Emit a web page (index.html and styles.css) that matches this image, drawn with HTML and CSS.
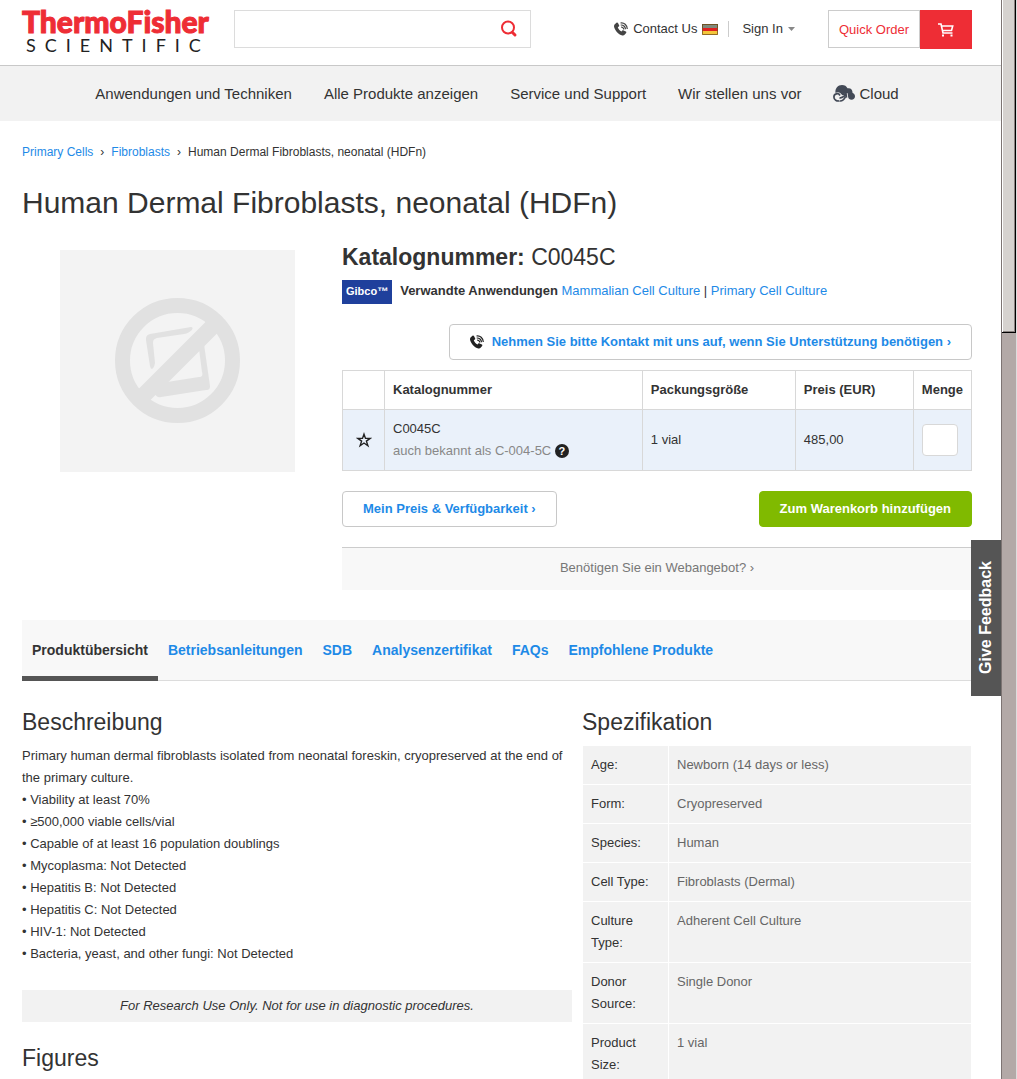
FILE: index.html
```html
<!DOCTYPE html>
<html lang="de">
<head>
  <meta charset="utf-8">
  <meta name="viewport" content="width=device-width,initial-scale=1.0">
  <title>Human Dermal Fibroblasts, neonatal (HDFn)</title>
  <link rel="stylesheet" href="styles.css">
</head>
<body>
  <svg class="sprite" aria-hidden="true">
    <symbol id="phone" viewBox="0 0 14 14">
      <path fill="currentColor" d="M.8 2.200 2.500.8c.6-.4 1.200-.2 1.600.4l1 2c.3.5.1 1-.3 1.300l-1 .7c.5 1.700 2 3.300 3.700 4.200l.8-.9c.4-.4.9-.4 1.300-.1l2.300 1.200c.5.3.6.9.2 1.300l-1.300 1.700c-.7.9-2 1.100-3.200.6C4 12 1 8.400.1 5-.1 3.900.1 2.800.8 2.200z"/>
      <path fill="none" stroke="currentColor" stroke-width="1.200" d="M6.500 1C10 .3 13.200 3 13.300 7M6.700 3c2.600-.2 4.600 1.500 4.800 4.200M7 5c1.600 0 2.600 1 2.800 2.500"/>
    </symbol>
  </svg>

  <div class="page">
    <header class="header">
      <a class="logo" href="#">
        <span class="logo-top">ThermoFisher</span>
        <span class="logo-bottom">SCIENTIFIC</span>
      </a>
      <form class="search" action="">
        <input type="text" aria-label="Search">
        <button type="submit" aria-label="Search">
          <svg width="18" height="18" viewBox="0 0 18 18"><circle cx="8" cy="7.500" r="6" fill="none" stroke="#ee2d35" stroke-width="2"/><path d="M12.500 12.500l2.500 2.500" stroke="#ee2d35" stroke-width="3" stroke-linecap="round"/></svg>
        </button>
      </form>
      <div class="account">
        <a class="contact" href="#">
          <svg class="icon-phone" width="14" height="14"><use href="#phone"/></svg>
          Contact Us
          <svg width="16" height="11" viewBox="0 0 16 11"><path fill="#3d4a35" d="M0 0h16v4H0z"/><path fill="#e01f1f" d="M0 4h16v3H0z"/><path fill="#f4c63a" d="M0 7h16v4H0z"/><path fill="#fff" opacity=".35" d="M1 1h14v3H1z"/><path fill="none" stroke="#7c5420" stroke-opacity=".8" d="M.5.5h15v10H.5z"/></svg>
        </a>
        <a class="signin" href="#">Sign In <svg width="7" height="4" viewBox="0 0 7 4"><path fill="#888" d="M0 0h7L3.500 4z"/></svg></a>
      </div>
      <div class="order">
        <a class="quick" href="#">Quick Order</a>
        <a class="cart" href="#" aria-label="Cart">
          <svg width="16" height="14" viewBox="0 0 16 14" fill="none" stroke="#fff"><path stroke-width="1.600" d="M0 1h3l2 9h9.500M3.500 3h11.200l-1.200 4.500H4.700"/><path fill="#fff" stroke="none" d="M4 11.500h2v2H4zm8.500 0h2v2h-2z"/></svg>
        </a>
      </div>
    </header>

    <nav class="nav">
      <a href="#">Anwendungen und Techniken</a>
      <a href="#">Alle Produkte anzeigen</a>
      <a href="#">Service und Support</a>
      <a href="#">Wir stellen uns vor</a>
      <a href="#" class="cloud">
        <svg width="22" height="17" viewBox="0 0 22 17">
          <path fill="#434a57" d="M2.500 8C1.800 3.500 5 0 9 0c2.600 0 4.600 1.200 5.500 3.300 3.200-.6 5.200 1.400 5 4.500C21.200 8.500 22 9.800 22 11.300c0 2-1.500 3.500-3.500 3.500-1.800 0-3-1-3.300-2.500L14.500 8 8.500 9.500C7 7 4.500 6.500 2.500 8z"/>
          <path fill="none" stroke="#434a57" stroke-width="1.700" d="M7 10.500C5.500 7.500.9 8.500.9 12c0 3 3 4.300 5.200 3.900M6.500 12.800c2.500.8 4-.8 6-3M6.500 16c3.500.3 5-2 6-4.500M9 9.500l4-.8.500 4"/>
        </svg>
        Cloud
      </a>
    </nav>

    <main class="content">
      <div class="breadcrumb">
        <a href="#">Primary Cells</a><span>›</span><a href="#">Fibroblasts</a><span>›</span>Human Dermal Fibroblasts, neonatal (HDFn)
      </div>
      <h1>Human Dermal Fibroblasts, neonatal (HDFn)</h1>

      <div class="product">
        <div class="product-image">
          <svg width="235" height="222" viewBox="0 0 235 222">
            <path fill="#f3f3f3" d="M0 0h235v222H0z"/>
            <g fill="#e1e1e1">
              <path d="M90 84l41-7c4 0 0 6-7 7l-27 4c-3 1-4 2-4 5l2 20c-1 6-4 8-5 3l-4-26c0-4 1-5 4-6z"/>
              <path d="M144 94l6 42c0 3-1 4-4 4l-45 7c-3 1-5-1-6-3l12-12 32-5c3 0 4-2 3-5l-3-23z"/>
            </g>
            <path stroke="#e1e1e1" stroke-width="16" d="M77 152l80-80"/>
            <circle cx="117.500" cy="110.500" r="55" fill="none" stroke="#e1e1e1" stroke-width="15"/>
          </svg>
        </div>

        <div class="product-info">
          <h2 class="catalog"><b>Katalognummer:</b> C0045C</h2>
          <div class="related">
            <span class="brand">Gibco™</span>
            <p><b>Verwandte Anwendungen</b> <a href="#">Mammalian Cell Culture</a> | <a href="#">Primary Cell Culture</a></p>
          </div>
          <a class="btn btn-contact" href="#"><svg width="14" height="14"><use href="#phone"/></svg>Nehmen Sie bitte Kontakt mit uns auf, wenn Sie Unterstützung benötigen ›</a>

          <table class="order-table">
            <thead>
              <tr>
                <th class="col-star"></th>
                <th>Katalognummer</th>
                <th class="col-size">Packungsgröße</th>
                <th class="col-price">Preis (EUR)</th>
                <th class="col-qty">Menge</th>
              </tr>
            </thead>
            <tbody>
              <tr>
                <td class="col-star"><button class="star" type="button" aria-label="Favorit"><svg width="16" height="16" viewBox="0 0 16 16"><path fill="none" stroke="#222" stroke-width="1.400" d="M8 2.200l1.500 4.200h4.600l-3.700 2.700 1.500 4.700L8 11l-3.900 2.800 1.500-4.700-3.700-2.700h4.600z"/></svg></button></td>
                <td>C0045C<div class="alias">auch bekannt als C-004-5C <span class="help">?</span></div></td>
                <td>1 vial</td>
                <td>485,00</td>
                <td><input class="qty" type="text" aria-label="Menge"></td>
              </tr>
            </tbody>
          </table>

          <div class="actions">
            <a class="btn" href="#">Mein Preis &amp; Verfügbarkeit ›</a>
            <button class="btn btn-cart" type="button">Zum Warenkorb hinzufügen</button>
          </div>
          <a class="quote" href="#">Benötigen Sie ein Webangebot? ›</a>
        </div>
      </div>

      <div class="tabs">
        <a class="active" href="#">Produktübersicht</a>
        <a href="#">Betriebsanleitungen</a>
        <a href="#">SDB</a>
        <a href="#">Analysenzertifikat</a>
        <a href="#">FAQs</a>
        <a href="#">Empfohlene Produkte</a>
      </div>

      <div class="details">
        <section>
          <h2>Beschreibung</h2>
          <p>Primary human dermal fibroblasts isolated from neonatal foreskin, cryopreserved at the end of the primary culture.</p>
          <ul>
            <li>Viability at least 70%</li>
            <li>≥500,000 viable cells/vial</li>
            <li>Capable of at least 16 population doublings</li>
            <li>Mycoplasma: Not Detected</li>
            <li>Hepatitis B: Not Detected</li>
            <li>Hepatitis C: Not Detected</li>
            <li>HIV-1: Not Detected</li>
            <li>Bacteria, yeast, and other fungi: Not Detected</li>
          </ul>
          <p class="note">For Research Use Only. Not for use in diagnostic procedures.</p>
          <h2>Figures</h2>
        </section>
        <section>
          <h2>Spezifikation</h2>
          <table class="specs">
            <tr><th>Age:</th><td>Newborn (14 days or less)</td></tr>
            <tr><th>Form:</th><td>Cryopreserved</td></tr>
            <tr><th>Species:</th><td>Human</td></tr>
            <tr><th>Cell Type:</th><td>Fibroblasts (Dermal)</td></tr>
            <tr><th>Culture Type:</th><td>Adherent Cell Culture</td></tr>
            <tr><th>Donor Source:</th><td>Single Donor</td></tr>
            <tr><th>Product Size:</th><td>1 vial</td></tr>
          </table>
        </section>
      </div>
    </main>
    <button class="feedback" type="button">Give Feedback</button>
  </div>
  <div class="scrollbar"><div class="thumb"></div></div>
</body>
</html>
```

FILE: styles.css
```css
* { box-sizing: border-box; }
body {
  margin: 0;
  height: 100vh;
  overflow: hidden;
  display: grid;
  grid-template-columns: 1fr 16px;
  font: 13px/22px "Liberation Sans", Helvetica, Arial, sans-serif;
  color: #333;
  background: #fff;
}
a { color: #1e8ae7; text-decoration: none; }
h1, h2, p, ul { margin: 0; padding: 0; font-weight: normal; }
button, input { font: inherit; }
svg { flex: none; }
.sprite { display: none; }
.page { position: relative; overflow: hidden; }

.header {
  height: 66px;
  padding: 10px 29px 0 22px;
  display: flex;
  align-items: flex-start;
  border-bottom: 1px solid #c8c8c8;
}
.logo { width: 212px; display: flex; flex-direction: column; font-family: Lato, sans-serif; }
.logo-top { font-size: 30px; line-height: 22px; font-weight: 900; color: #ee2d35; -webkit-text-stroke: 1px #ee2d35; }
.logo-bottom { margin-top: 3px; font-size: 18px; line-height: 20px; padding-left: 4px; color: #222; letter-spacing: 9px; }

.search {
  width: 297px;
  height: 38px;
  display: flex;
  border: 1px solid #dcdcdc;
}
.search input { flex: 1; min-width: 0; border: none; outline: none; padding: 0 10px; }
.search button { width: 42px; padding: 0; border: none; background: none; cursor: pointer; }
.search svg { display: block; margin: 0 auto; }

.account { margin-left: auto; height: 38px; display: flex; align-items: center; }
.account a { color: #333; display: flex; align-items: center; gap: 5px; }
.contact { padding-right: 10px; border-right: 1px solid #ccc; height: 16px; }
.contact .icon-phone { color: #444; }
.signin { padding-left: 13px; }
.order { margin-left: 33px; display: flex; }
.quick {
  height: 38px;
  padding: 8px 10px;
  border: 1px solid #ccc;
  color: #ee2d35;
}
.cart { width: 52px; height: 39px; display: flex; align-items: center; justify-content: center; background: #ee2d35; }

.nav {
  height: 55px;
  padding-right: 7px;
  display: flex;
  align-items: center;
  justify-content: center;
  gap: 32px;
  background: #f2f2f2;
  font-size: 15px;
}
.nav a { color: #333; }
.cloud { display: flex; align-items: center; gap: 4px; }

.content { padding: 20px 29px 0 22px; }
.breadcrumb { font-size: 12px; }
.breadcrumb span { margin: 0 7px; }
h1 { margin-top: 20px; font-size: 30px; line-height: 40px; }
h2 { font-size: 23px; line-height: 26px; }

.product { margin-top: 21px; display: grid; grid-template-columns: 310fr 630fr; gap: 10px; }
.product-image { padding-top: 6px; text-align: center; }
.product-info { display: flex; flex-direction: column; }
.related { margin-top: 10px; display: flex; gap: 8px; }
.brand {
  height: 24px;
  padding: 0 4px;
  background: #1f409c;
  color: #fff;
  font-size: 11px;
  font-weight: bold;
}
.btn {
  height: 36px;
  padding: 0 20px;
  display: flex;
  align-items: center;
  gap: 8px;
  border: 1px solid #c8c8c8;
  border-radius: 4px;
  background: #fff;
  font-weight: bold;
}
.btn-contact { margin-top: 20px; align-self: flex-end; }
.btn-contact svg { color: #222; }
.btn-cart { background: #80ba00; border-color: #80ba00; color: #fff; cursor: pointer; }

.order-table { margin-top: 10px; width: 100%; border-collapse: collapse; }
.order-table th, .order-table td { padding: 8px; border: 1px solid #d8d8d8; text-align: left; }
.order-table td { height: 61px; background: #eaf1fa; }
.order-table .col-star { width: 42px; text-align: center; }
.col-size { width: 153px; }
.col-price { width: 118px; }
.col-qty { width: 58px; }
.star { display: flex; margin: 0 auto; padding: 0; border: none; background: none; cursor: pointer; }
.alias { color: #888; }
.help {
  display: inline-block;
  width: 14px;
  height: 14px;
  border-radius: 7px;
  background: #222;
  color: #fff;
  font-size: 11px;
  line-height: 14px;
  font-weight: bold;
  text-align: center;
}
.qty { display: block; width: 36px; height: 32px; border: 1px solid #d8d8d8; border-radius: 4px; background: #fff; }

.actions { margin-top: 20px; display: flex; justify-content: space-between; }
.quote {
  margin-top: 20px;
  height: 43px;
  border-top: 1px solid #ccc;
  background: #f8f8f8;
  color: #777;
  line-height: 40px;
  text-align: center;
}

.tabs { margin-top: 30px; height: 61px; display: flex; background: #f8f8f8; border-bottom: 1px solid #dcdcdc; font-size: 14px; }
.tabs a { padding: 0 10px; height: 61px; line-height: 60px; font-weight: bold; }
.tabs .active { color: #333; border-bottom: 5px solid #555; }

.details { margin-top: 28px; display: grid; grid-template-columns: 550fr 390fr; gap: 10px; }
.details h2 { margin-bottom: 10px; }
.details ul { list-style: none; }
.details li::before { content: "• "; }
.details .note { margin: 25px 0 23px; padding: 5px; background: #f2f2f2; font-style: italic; text-align: center; }
.specs { width: 100%; border-collapse: collapse; }
.specs th, .specs td {
  padding: 8px;
  border: 1px solid #fff;
  background: #f2f2f2;
  color: #666;
  font-weight: normal;
  text-align: left;
  vertical-align: top;
}
.specs th { width: 86px; color: #333; }

.feedback {
  position: absolute;
  top: 540px;
  right: 0;
  width: 30px;
  height: 156px;
  padding: 0;
  border: none;
  background: #555;
  color: #fff;
  font-size: 16px;
  font-weight: bold;
  writing-mode: vertical-rl;
  transform: rotate(180deg);
  cursor: pointer;
}

.scrollbar { background: #b3a9a7; border-left: 1px solid #7d7473; border-right: 1px solid #ddd; }
.thumb { height: 333px; background: #d6d2cf; border: solid #000; border-width: 0 1px 1px 0; box-shadow: inset 1px 0 #fff, inset -1px -1px #8a8280; }
```
